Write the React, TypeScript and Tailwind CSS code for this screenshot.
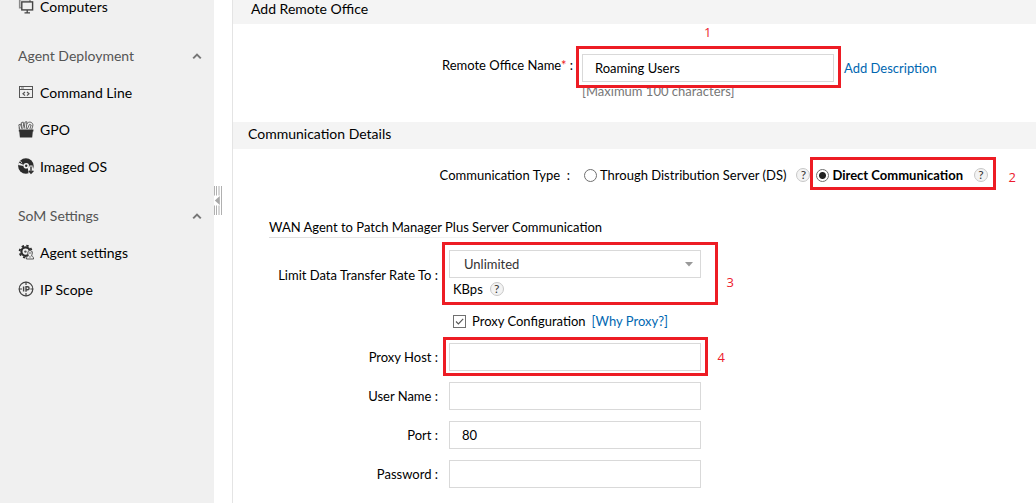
import type { ReactNode } from "react";

function ComputersIcon() {
  return (
    <svg width="16" height="18" viewBox="0 0 16 18" fill="none" aria-hidden="true">
      <path d="M3.5 9.8H1.7V1.5H12V4" stroke="#8a8a8a" strokeWidth="1.6" />
      <rect x="3.8" y="3.9" width="10.8" height="8" stroke="#444" strokeWidth="1.4" />
      <path d="M9.2 12V14.4M6.5 14.8H12" stroke="#444" strokeWidth="1.3" />
    </svg>
  );
}

function CommandLineIcon() {
  return (
    <svg width="16" height="16" viewBox="0 0 16 16" fill="none" stroke="#555" aria-hidden="true">
      <rect x="1.5" y="1.5" width="13" height="11" strokeWidth="1" />
      <path d="M2 4.5H14" strokeWidth="1" />
      <path d="M3 3H6" strokeWidth="0.8" />
      <path d="M7 7L5 8.8L7 10.6M9 7L11 8.8L9 10.6" strokeWidth="1.2" />
    </svg>
  );
}

function GpoIcon() {
  return (
    <svg width="16" height="18" viewBox="0 0 16 18" aria-hidden="true">
      <path d="M0.8 8.6H15.4V10.6H14.8L14.2 16.6H1.9L1.3 10.6H0.8Z" fill="#303030" />
      <g fill="none" stroke="#666" strokeWidth="1">
        <path d="M1.8 8.6L0.8 3.8L2.4 3.2L4.2 8.2" />
        <path d="M4.2 7.6L3.2 1.8L5.2 1L6.2 7.6" />
        <path d="M6.4 6.6L7 1L9 0.8L8.2 8" />
        <path d="M8.8 3C10.6 -0.6 15.8 1.4 14.8 5L13.6 8.6" />
        <path d="M9.4 8L11.4 3.4L13.2 4L11.8 8.2" />
        <path d="M0.5 7L2 8.4M5 4.1L7 6.1" />
      </g>
    </svg>
  );
}

function DiscIcon() {
  return (
    <svg width="16" height="18" viewBox="0 0 16 18" aria-hidden="true">
      <circle cx="7.9" cy="8" r="7.8" fill="#2c2c2c" />
      <path d="M0.6 4.6L5.8 7L5.5 8L0.1 7Z" fill="#f0f0f0" />
      <path d="M2 2.6L4 5.2" stroke="#f0f0f0" strokeWidth="0.8" />
      <circle cx="8.2" cy="7.8" r="2.8" fill="#f0f0f0" />
      <circle cx="8.2" cy="7.8" r="1.2" fill="#2c2c2c" />
      <path d="M9.8 9.8L11.4 8.6V7.6H14.6V9L16 12V16H10.6Z" fill="#f0f0f0" />
      <path
        d="M13 8.4V15M10.8 12.8L13 15.2L15.4 12.8"
        stroke="#2c2c2c"
        strokeWidth="1.4"
        fill="none"
      />
    </svg>
  );
}

function AgentSettingsIcon() {
  return (
    <svg width="16" height="18" viewBox="0 0 16 18" fill="none" aria-hidden="true">
      <circle cx="7.6" cy="7.6" r="4.2" stroke="#2c2c2c" strokeWidth="2.2" />
      <circle
        cx="7.6"
        cy="7.6"
        r="6"
        stroke="#2c2c2c"
        strokeWidth="1.8"
        strokeDasharray="2.4 2.31"
      />
      <circle cx="7.4" cy="7.6" r="1.2" fill="#555" />
      <path d="M8.4 15C8.4 13 9.6 12 10.6 11.6C9 9.4 9.8 6.6 12 6.6C14.2 6.6 15 9.4 13.4 11.6C14.6 12 15.6 13 15.6 15Z" fill="#f0f0f0" stroke="#555" strokeWidth="1" />
      <path d="M10.8 9H13.2M11.2 12.4L12 13.4L12.9 12.4" stroke="#555" strokeWidth="0.9" />
    </svg>
  );
}

function IpScopeIcon() {
  return (
    <svg width="16" height="18" viewBox="0 0 16 18" fill="none" stroke="#444" aria-hidden="true">
      <circle cx="8" cy="8" r="6.8" strokeWidth="1.2" />
      <path d="M8 0.8V4M8 12V15.2M0.8 8H4M12.4 8H15.2" strokeWidth="1.2" />
      <path d="M5.6 5.4V10.6M8 10.8V5.8H9.6A1.5 1.5 0 0 1 9.6 8.8H8" strokeWidth="1.4" />
    </svg>
  );
}

function NavItem({ icon, children }: { icon: ReactNode; children: ReactNode }) {
  return (
    <li>
      <a href="#" className="flex h-[37px] items-center gap-1.5 text-sm leading-none text-black">
        <span className="flex w-4 shrink-0 justify-center">{icon}</span>
        {children}
      </a>
    </li>
  );
}

function NavHeading({ children }: { children: ReactNode }) {
  return (
    <button
      type="button"
      className="mt-3 flex h-[37px] w-full items-center justify-between text-sm text-[#555]"
    >
      {children}
      <svg width="10" height="8" viewBox="0 0 10 8" fill="none" aria-hidden="true">
        <path d="M1.2 6.4L5 2.6L8.8 6.4" stroke="#777" strokeWidth="2" />
      </svg>
    </button>
  );
}

function Help({ label }: { label: string }) {
  return (
    <button
      type="button"
      aria-label={label}
      className="flex size-3.5 shrink-0 items-center justify-center rounded-full border border-[#c8c8c8] bg-[#f3f3f3] text-xs leading-none font-normal text-[#333]"
    >
      ?
    </button>
  );
}

function SectionTitle({ className, children }: { className: string; children: ReactNode }) {
  return (
    <h2 className={`flex items-center bg-[#f4f4f4] text-sm text-black ${className}`}>{children}</h2>
  );
}

function Callout({ box, mark, children }: { box: string; mark: string; children: ReactNode }) {
  return (
    <>
      <span className={`pointer-events-none absolute border-3 border-[#ed1c24] ${box}`} />
      <span
        className={`pointer-events-none absolute font-['Open_Sans',sans-serif] text-[13px] leading-4 text-[#ed1c2e] ${mark}`}
      >
        {children}
      </span>
    </>
  );
}

const inputClass = "block h-7 w-full border border-[#d9d9d9] bg-white px-3 text-[13px] text-black outline-none";
const radioClass =
  "size-[13px] shrink-0 appearance-none rounded-full border border-[#707070] bg-white checked:bg-[radial-gradient(circle,#222_0_3px,#fff_4px)]";

function Field({ id, label, type = "text", value, children }: {
  id: string;
  label: string;
  type?: string;
  value?: string;
  children?: ReactNode;
}) {
  return (
    <div className="grid grid-cols-[205px_252px] items-center gap-x-[11px]">
      <label htmlFor={id} className="text-right">{label} :</label>
      <div className="relative">
        <input id={id} type={type} defaultValue={value} className={inputClass} />
        {children}
      </div>
    </div>
  );
}

export default function App() {
  return (
    <div className="flex min-h-screen overflow-hidden bg-white font-[Lato,sans-serif] text-[13px] leading-5 text-black">
      <nav className="w-[214px] shrink-0 bg-[#f0f0f0] pr-3 pl-[18px]">
        <ul className="-mt-3">
          <NavItem icon={<ComputersIcon />}>Computers</NavItem>
        </ul>
        <NavHeading>Agent Deployment</NavHeading>
        <ul>
          <NavItem icon={<CommandLineIcon />}>Command Line</NavItem>
          <NavItem icon={<GpoIcon />}>GPO</NavItem>
          <NavItem icon={<DiscIcon />}>Imaged OS</NavItem>
        </ul>
        <NavHeading>SoM Settings</NavHeading>
        <ul>
          <NavItem icon={<AgentSettingsIcon />}>Agent settings</NavItem>
          <NavItem icon={<IpScopeIcon />}>IP Scope</NavItem>
        </ul>
      </nav>

      <div className="w-[18px] shrink-0 pt-[186px]">
        <button type="button" aria-label="Collapse sidebar" className="block">
          <svg width="8" height="29" viewBox="0 0 8 29" aria-hidden="true">
            <path d="M0.5 0V29M2.5 0V29M5 0V29M7.5 0V29" stroke="#b0b0b0" strokeWidth="1" />
            <path d="M0 9.5H6V19.5H0Z" fill="#fff" />
            <path d="M0.8 14.5L5.8 10V19Z" fill="#a8a8a8" />
          </svg>
        </button>
      </div>

      <main className="min-w-0 flex-1 border-l border-[#e4e4e4]">
        <form>
          <section>
            <SectionTitle className="h-6 pb-1.5 pl-[18px]">Add Remote Office</SectionTitle>
            <div className="grid grid-cols-[340px_252px_1fr] gap-x-[9px] pt-[30px] pb-[22px]">
              <label htmlFor="office" className="pt-px text-right">
                Remote Office Name<span className="text-[#ed1c24]">*</span> :
              </label>
              <div className="relative">
                <input id="office" type="text" defaultValue="Roaming Users" className={inputClass} />
                <p className="leading-[18px] text-[#777]">[Maximum 100 characters]</p>
                <Callout box="-top-2 -left-1.5 -right-[7px] h-[42px]" mark="left-[122px] -top-[30px]">1</Callout>
              </div>
              <a href="#" className="pl-px leading-7 text-[#0067b1]">Add Description</a>
            </div>
          </section>

          <section>
            <SectionTitle className="h-[27px] pb-1 pl-[15px]">Communication Details</SectionTitle>
            <div className="pt-2">
              <div
                role="radiogroup"
                aria-labelledby="comm-type"
                className="flex h-9 items-center"
              >
                <span id="comm-type" className="w-[337px] shrink-0 text-right whitespace-pre">
                  Communication Type  :
                </span>
                <div className="ml-3.5 flex items-center gap-2.5">
                  <label className="flex items-center gap-[3px] whitespace-nowrap">
                    <input type="radio" name="comm" className={radioClass} />
                    Through Distribution Server (DS)
                  </label>
                  <Help label="About distribution servers" />
                </div>
                <div className="relative ml-1.5 flex items-center gap-[11px]">
                  <label className="flex items-center gap-[3px] font-bold whitespace-nowrap">
                    <input type="radio" name="comm" defaultChecked className={radioClass} />
                    Direct Communication
                  </label>
                  <Help label="About direct communication" />
                  <Callout box="-left-1.5 -right-2 -top-2 h-[33px]" mark="-right-7 top-1">2</Callout>
                </div>
              </div>

              <div className="pt-6 pl-9">
                <h3>WAN Agent to Patch Manager Plus Server Communication</h3>
                <div className="h-px w-[280px] bg-linear-to-r from-[#dcdcdc] to-white" />
              </div>

              <div className="grid grid-cols-[205px_252px] items-center gap-x-[11px] pt-3">
                <label htmlFor="rate" className="text-right">Limit Data Transfer Rate To :</label>
                <div className="relative">
                  <select
                    id="rate"
                    className="block h-7 w-full appearance-none border border-[#d9d9d9] bg-white pl-3.5 text-[13px] text-[#333] outline-none"
                  >
                    <option>Unlimited</option>
                  </select>
                  <svg
                    className="pointer-events-none absolute top-3 right-2"
                    width="8"
                    height="5"
                    viewBox="0 0 8 5"
                    aria-hidden="true"
                  >
                    <path d="M0 0H8L4 4.5Z" fill="#999" />
                  </svg>
                  <div className="flex h-[22px] items-center gap-[7px] pl-1">
                    <span>KBps</span>
                    <Help label="About the transfer rate" />
                  </div>
                  <Callout box="-top-2 -left-[7px] -right-[17px] h-[63px]" mark="-right-[33px] top-6">3</Callout>
                </div>
              </div>

              <div className="flex items-center gap-1.5 pt-[11px] pb-3 pl-[220px]">
                <label className="flex items-center gap-1.5">
                  <span className="relative flex">
                    <input
                      type="checkbox"
                      defaultChecked
                      className="peer size-[13px] appearance-none border border-[#707070] bg-white"
                    />
                    <svg
                      className="pointer-events-none absolute top-0 left-0 hidden peer-checked:block"
                      width="13"
                      height="13"
                      viewBox="0 0 13 13"
                      fill="none"
                      aria-hidden="true"
                    >
                      <path d="M3 6.5L5.4 8.9L10.2 3.8" stroke="#555" strokeWidth="1.1" />
                    </svg>
                  </span>
                  Proxy Configuration
                </label>
                <a href="#" className="text-[#0067b1]">[Why Proxy?]</a>
              </div>

              <div className="flex flex-col gap-[11px]">
                <Field id="host" label="Proxy Host">
                  <Callout box="-top-1.5 -left-1.5 -right-[7px] h-[39px]" mark="-right-6 top-1.5">4</Callout>
                </Field>
                <Field id="user" label="User Name" />
                <Field id="port" label="Port" value="80" />
                <Field id="password" label="Password" type="password" />
              </div>
            </div>
          </section>
        </form>
      </main>
    </div>
  );
}
